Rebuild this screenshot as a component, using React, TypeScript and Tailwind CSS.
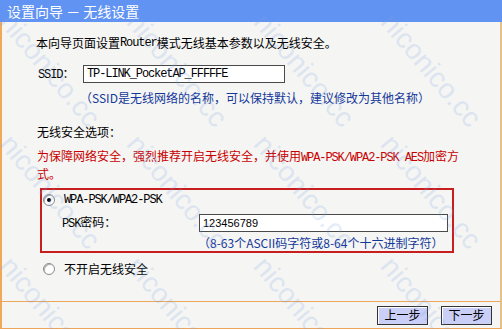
import React from "react";

const cjk = { fontFamily: '"Noto Sans CJK SC", "Liberation Sans", sans-serif' };
const mono = { fontFamily: '"Liberation Mono", "Noto Sans CJK SC", monospace' };

function M({ children }: { children: React.ReactNode }) {
  return (
    <span className="text-[12px] tracking-[-1.1px]" style={mono}>
      {children}
    </span>
  );
}

function Radio({ checked }: { checked?: boolean }) {
  return (
    <span className="flex h-[12px] w-[12px] items-center justify-center rounded-full border border-[#8a8a8a] bg-white shadow-[inset_1px_1px_0_#b0b0b0]">
      {checked && <span className="h-[4px] w-[4px] rounded-full bg-black" />}
    </span>
  );
}

const marks: { x: number; y: number }[] = [];
for (let j = 0; j < 3; j++) for (let i = 0; i < 4; i++) marks.push({ x: 16 + 127 * i, y: 8 + 122 * j });

export default function App() {
  return (
    <div className="relative h-[329px] w-[502px] overflow-hidden bg-[#f5f5f3] text-[12px] text-black" style={cjk}>
      <div className="flex h-[22px] items-center bg-[#6193f2] pl-[7px] text-[14px] text-white">
        设置向导 － 无线设置
      </div>
      <div className="flex h-[307px] flex-col border-b border-l-2 border-r-2 border-b-[#eda55a] border-l-[#f0a85a] border-r-[#e6c08a]">
        <div className="flex h-[279px] flex-col">
          <div className="mt-[12px] flex h-[18px] items-center pl-[34px] leading-[18px]">
            本向导页面设置<M>Router</M>模式无线基本参数以及无线安全。
          </div>
          <div className="mt-[13px] flex h-[18px] items-center">
            <span className="w-[81px] pl-[36px]">
              <M>SSID：</M>
            </span>
            <div className="flex h-[18px] w-[202px] items-center border border-[#4a4a4a] bg-white pl-[3px]">
              <M>TP-LINK_PocketAP_FFFFFE</M>
            </div>
          </div>
          <div className="mt-[7px] flex h-[16px] items-center pl-[78px] text-[12px] text-[#14389a]">
            （SSID是无线网络的名称，可以保持默认，建议修改为其他名称）
          </div>
          <div className="mt-[18px] flex h-[16px] items-center pl-[35px]">无线安全选项：</div>
          <div className="mt-[7px] pl-[35px] leading-[18px] text-[#c80000]">
            <div className="h-[18px]">
              为保障网络安全，强烈推荐开启无线安全，并使用<M>WPA-PSK/WPA2-PSK AES</M>加密方
            </div>
            <div className="h-[18px]">式。</div>
          </div>
          <div className="ml-[38px] mt-[5px] flex h-[65px] w-[414px] flex-col border-2 border-[#c81e1e] pl-[1px]">
            <div className="mt-[3px] flex h-[14px] items-center gap-[9px]">
              <Radio checked />
              <M>WPA-PSK/WPA2-PSK</M>
            </div>
            <div className="mt-[7px] flex h-[18px] items-center">
              <span className="w-[156px] pl-[19px]">
                <M>PSK</M>密码：
              </span>
              <div
                className="flex h-[18px] w-[249px] items-center border border-[#4a4a4a] bg-white pl-[3px] text-[11px]"
                style={{ fontFamily: '"Liberation Sans", sans-serif' }}
              >
                123456789
              </div>
            </div>
            <div className="mt-[3px] flex h-[16px] items-center pl-[155px] text-[#14389a]">
              （8-63个ASCII码字符或8-64个十六进制字符）
            </div>
          </div>
          <div className="mt-[9px] flex h-[14px] items-center gap-[9px] pl-[41px]">
            <Radio />
            <span>不开启无线安全</span>
          </div>
        </div>
        <div className="flex flex-1 items-center justify-end gap-[13px] border-t border-[#eda55a] pr-[8px]">
          <button className="flex h-[19px] w-[51px] items-center justify-center border border-[#333] bg-[#c9cff7] text-[12px] shadow-[inset_1px_1px_0_#fff]">
            上一步
          </button>
          <button className="flex h-[19px] w-[51px] items-center justify-center border border-[#333] bg-[#c9cff7] text-[12px] shadow-[inset_1px_1px_0_#fff]">
            下一步
          </button>
        </div>
      </div>
      <div className="pointer-events-none absolute inset-0">
        {marks.map((m, k) => (
          <span
            key={k}
            className="absolute origin-top-left whitespace-nowrap text-[28px] leading-none text-[#7aa3e8] opacity-20"
            style={{ left: m.x, top: m.y, transform: "rotate(50deg)", fontFamily: '"Liberation Sans", sans-serif' }}
          >
            niconico.cc
          </span>
        ))}
      </div>
    </div>
  );
}
